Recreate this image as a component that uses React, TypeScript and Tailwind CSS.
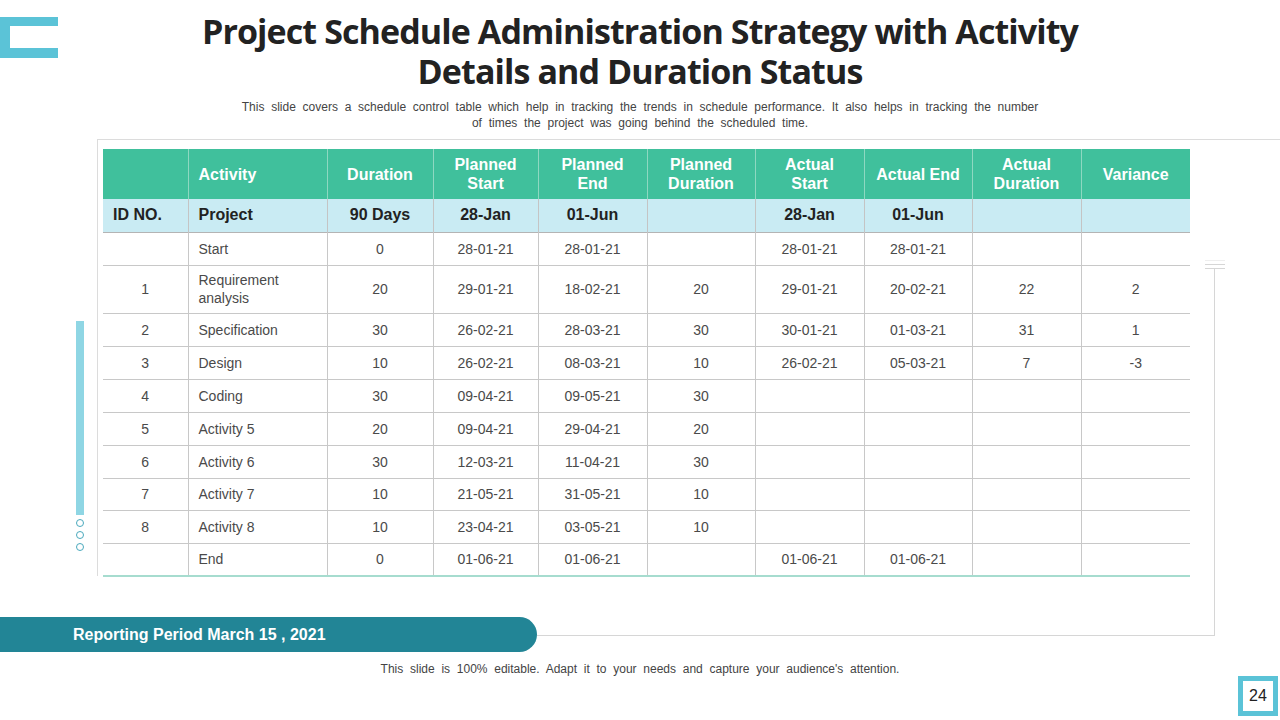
import React from 'react';

const cols = [85, 139, 106, 105, 109, 108, 109, 108, 109, 109];

const headers: React.ReactNode[] = [
  '',
  'Activity',
  'Duration',
  <>Planned<br />Start</>,
  <>Planned<br />End</>,
  <>Planned<br />Duration</>,
  <>Actual<br />Start</>,
  'Actual End',
  <>Actual<br />Duration</>,
  'Variance',
];

const rows: { h: number; cells: string[] }[] = [
  { h: 33, cells: ['', 'Start', '0', '28-01-21', '28-01-21', '', '28-01-21', '28-01-21', '', ''] },
  { h: 48, cells: ['1', 'Requirement analysis', '20', '29-01-21', '18-02-21', '20', '29-01-21', '20-02-21', '22', '2'] },
  { h: 33, cells: ['2', 'Specification', '30', '26-02-21', '28-03-21', '30', '30-01-21', '01-03-21', '31', '1'] },
  { h: 33, cells: ['3', 'Design', '10', '26-02-21', '08-03-21', '10', '26-02-21', '05-03-21', '7', '-3'] },
  { h: 33, cells: ['4', 'Coding', '30', '09-04-21', '09-05-21', '30', '', '', '', ''] },
  { h: 33, cells: ['5', 'Activity 5', '20', '09-04-21', '29-04-21', '20', '', '', '', ''] },
  { h: 33, cells: ['6', 'Activity 6', '30', '12-03-21', '11-04-21', '30', '', '', '', ''] },
  { h: 32, cells: ['7', 'Activity 7', '10', '21-05-21', '31-05-21', '10', '', '', '', ''] },
  { h: 33, cells: ['8', 'Activity 8', '10', '23-04-21', '03-05-21', '10', '', '', '', ''] },
  { h: 33, cells: ['', 'End', '0', '01-06-21', '01-06-21', '', '01-06-21', '01-06-21', '', ''] },
];

const project = ['ID NO.', 'Project', '90 Days', '28-Jan', '01-Jun', '', '28-Jan', '01-Jun', '', ''];

function Frame() {
  return (
    <>
      {/* logo bracket */}
      <div className="absolute left-0 top-[17px] w-[58px] h-[41px] bg-[#5bc3d7]">
        <div className="ml-[10px] mt-[9px] h-[22px] bg-white" />
      </div>
      {/* outline lines */}
      <div className="absolute left-[97px] top-[139px] w-[1183px] h-px bg-[#dcdcdc]" />
      <div className="absolute left-[97px] top-[139px] w-px h-[437px] bg-[#dcdcdc]" />
      <div className="absolute left-[1214px] top-[268px] w-px h-[368px] bg-[#d6d6d6]" />
      <div className="absolute left-[537px] top-[635px] w-[678px] h-px bg-[#d6d6d6]" />
      <div className="absolute left-[1205px] top-[260px] w-[20px] flex flex-col gap-[3px]">
        <div className="h-px bg-[#eeeeee]" />
        <div className="h-px bg-[#d6d6d6]" />
        <div className="h-px bg-[#d6d6d6]" />
      </div>
      {/* left bar and dots */}
      <div className="absolute left-[76px] top-[321px] flex flex-col items-center gap-[4px]">
        <div className="w-[8px] h-[194px] bg-[#8fd6e4]" />
        <div className="w-[8px] h-[8px] rounded-full border border-[#4aa9bd]" />
        <div className="w-[8px] h-[8px] rounded-full border border-[#4aa9bd]" />
        <div className="w-[8px] h-[8px] rounded-full border border-[#4aa9bd]" />
      </div>
    </>
  );
}

export default function App() {
  return (
    <div className="relative w-[1280px] h-[720px] overflow-hidden bg-white font-['Liberation_Sans',Arial,sans-serif]">
      <Frame />

      <div className="relative flex flex-col items-center pt-[11px]">
        <h1 className="font-['Open_Sans',sans-serif] font-bold text-[34px] leading-[40px] tracking-[-0.9px] text-[#222] text-center">
          Project Schedule Administration Strategy with Activity
          <br />
          Details and Duration Status
        </h1>
        <p className="mt-[8px] text-[12px] leading-[16px] text-[#444] text-center [word-spacing:3.4px]">
          This slide covers a schedule control table which help in tracking the trends in schedule performance. It also helps in tracking the number
          <br />
          of times the project was going behind the scheduled time.
        </p>
      </div>

      <div className="relative ml-[103px] mt-[18px]">
        <table className="table-fixed border-collapse w-[1087px]">
          <colgroup>
            {cols.map((w, i) => (
              <col key={i} style={{ width: w }} />
            ))}
          </colgroup>
          <thead>
            <tr className="h-[50px] bg-[#40c09c]">
              {headers.map((h, i) => (
                <th
                  key={i}
                  className={`text-white font-bold text-[16px] leading-[19px] border-[#8ed8c1] ${i < 9 ? 'border-r' : ''} ${
                    i === 1 ? 'text-left pl-[10px]' : 'text-center px-[4px]'
                  }`}
                >
                  {h}
                </th>
              ))}
            </tr>
          </thead>
          <tbody>
            <tr className="h-[33px] bg-[#c9ebf3] border-b border-[#b4b4b4]">
              {project.map((c, i) => (
                <td
                  key={i}
                  className={`font-bold text-[16px] text-[#222] border-[#c4c4c4] ${i < 9 ? 'border-r' : ''} ${
                    i < 2 ? 'text-left pl-[10px]' : 'text-center'
                  }`}
                >
                  {c}
                </td>
              ))}
            </tr>
            {rows.map((r, ri) => (
              <tr
                key={ri}
                style={{ height: r.h }}
                className={ri === rows.length - 1 ? 'border-b-2 border-[#a6dccf]' : 'border-b border-[#c8c8c8]'}
              >
                {r.cells.map((c, i) => (
                  <td
                    key={i}
                    className={`text-[14px] leading-[18px] text-[#4a4a4a] border-[#c8c8c8] ${i < 9 ? 'border-r' : ''} ${
                      i === 1 ? 'text-left pl-[10px] pr-[6px]' : 'text-center'
                    }`}
                  >
                    {c}
                  </td>
                ))}
              </tr>
            ))}
          </tbody>
        </table>
      </div>

      <div className="mt-[40px] w-[537px] h-[35px] bg-[#228596] rounded-r-full flex items-center pl-[73px]">
        <span className="text-white font-bold text-[16px]">Reporting Period March 15 , 2021</span>
      </div>

      <p className="mt-[9px] text-center text-[12px] leading-[16px] text-[#444] [word-spacing:3.4px]">
        This slide is 100% editable. Adapt it to your needs and capture your audience's attention.
      </p>

      <div className="absolute left-[1238px] top-[676px] w-[40px] h-[40px] bg-[#5bc3d7] p-[5px]">
        <div className="w-full h-full bg-white flex items-center justify-center text-[16px] text-[#222]">24</div>
      </div>
    </div>
  );
}
